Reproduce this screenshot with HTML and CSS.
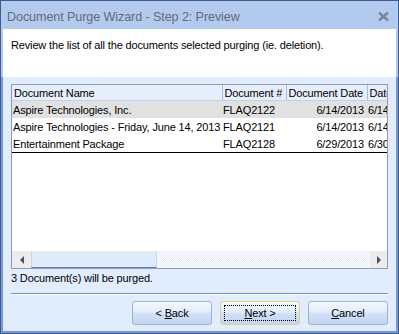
FILE: index.html
```html
<!DOCTYPE html>
<html lang="en">
<head>
  <meta charset="UTF-8" />
  <title>Document Purge Wizard</title>
  <link rel="stylesheet" href="styles.css">
</head>
<body>
  <div class="window">
    <div class="titlebar">
      <span class="title">Document Purge Wizard - Step 2: Preview</span>
      <svg class="close" width="11" height="9" viewBox="0 0 11 9">
        <path d="M1 0.5 L10 8.5 M10 0.5 L1 8.5" stroke="#7b8394" stroke-width="2.4" />
      </svg>
    </div>

    <div class="intro">Review the list of all the documents selected purging (ie. deletion).</div>

    <div class="panel">
      <div class="listbox">
        <div class="grid">
          <table>
            <colgroup>
              <col style="width:210px"><col style="width:64px"><col style="width:81px"><col style="width:40px">
            </colgroup>
            <thead>
              <tr><th>Document Name</th><th>Document #</th><th>Document Date</th><th>Date</th></tr>
            </thead>
            <tbody>
              <tr class="selected"><td>Aspire Technologies, Inc.</td><td>FLAQ2122</td><td class="num">6/14/2013</td><td>6/14/2013</td></tr>
              <tr><td>Aspire Technologies - Friday, June 14, 2013</td><td>FLAQ2121</td><td class="num">6/14/2013</td><td>6/14/2013</td></tr>
              <tr class="last"><td>Entertainment Package</td><td>FLAQ2128</td><td class="num">6/29/2013</td><td>6/30/2013</td></tr>
            </tbody>
          </table>
        </div>
        <div class="hscroll">
          <div class="sbtn"><span class="arrow left"></span></div>
          <div class="track"><div class="thumb"></div></div>
          <div class="sbtn"><span class="arrow right"></span></div>
        </div>
      </div>

      <div class="status">3 Document(s) will be purged.</div>
      <div class="divider"></div>

      <div class="buttons">
        <button class="btn">&lt; <u>B</u>ack</button>
        <button class="btn default"><span class="focus"><u>N</u>ext &gt;</span></button>
        <button class="btn"><u>C</u>ancel</button>
      </div>
    </div>
  </div>
</body>
</html>
```

FILE: styles.css
```css
body {
  margin: 0;
  background: #fff;
  font-family: "Liberation Sans", sans-serif;
  font-size: 11px;
  letter-spacing: -0.15px;
  color: #000;
}
.window {
  width: 399px;
  height: 334px;
  box-sizing: border-box;
  border: 1px solid #3e5c92;
  background: #b2caee;
  display: flex;
  flex-direction: column;
}
.titlebar {
  height: 28px;
  flex: none;
  display: flex;
  align-items: center;
  justify-content: space-between;
  padding: 0 9px 0 6px;
}
.title {
  font-size: 12.6px;
  letter-spacing: -0.1px;
  color: #626a7c;
  padding-top: 3px;
}
.close {
  display: block;
  margin-top: 2px;
}
.intro {
  height: 48px;
  flex: none;
  margin: 0 2px;
  background: #fff;
  box-sizing: border-box;
  padding: 10px 0 0 8px;
}
.panel {
  flex: 1;
  background: #e1ecfc;
  border: 2px solid #7898d0;
  border-top: none;
  padding: 7px 8px 6px;
  display: flex;
  flex-direction: column;
}
.listbox {
  height: 185px;
  box-sizing: border-box;
  border: 1px solid #8d9cb4;
  background: #fff;
  display: flex;
  flex-direction: column;
}
.grid {
  flex: 1;
  overflow: hidden;
}
table {
  table-layout: fixed;
  border-collapse: collapse;
  width: 395px;
  font-size: 11px;
}
th, td {
  white-space: nowrap;
  overflow: hidden;
  padding: 0 2px 0 1px;
  text-align: left;
  font-weight: normal;
}
th {
  height: 15px;
  background: #e6eefb;
  border-right: 1px solid #a5bbe0;
  border-bottom: 1px solid #c3d2ea;
  padding-left: 2px;
}
td {
  height: 17px;
}
td.num {
  text-align: right;
  padding-right: 3px;
}
tr.selected td {
  background: #e1e1e1;
}
tr.last td {
  border-bottom: 1px solid #000;
}
.hscroll {
  height: 17px;
  flex: none;
  display: flex;
}
.sbtn {
  width: 19px;
  background: #ececec;
  display: flex;
  align-items: center;
  justify-content: center;
}
.sbtn:last-child {
  width: 17px;
}
.arrow {
  width: 0;
  height: 0;
  border-top: 4px solid transparent;
  border-bottom: 4px solid transparent;
}
.arrow.left {
  border-right: 4px solid #3d4f7a;
}
.arrow.right {
  border-left: 4px solid #3d4f7a;
}
.track {
  flex: 1;
  background-color: #fff;
  background-image: repeating-conic-gradient(#e4ecf8 0 25%, #fff 0 50%);
  background-size: 2px 2px;
}
.thumb {
  width: 126px;
  height: 17px;
  box-sizing: border-box;
  background: #dfeafc;
  border: 1px solid #c9d4e4;
  border-top-color: #f3f0e0;
  border-bottom: 1px solid #5a7cc0;
}
.status {
  height: 14px;
  margin-top: 3px;
}
.divider {
  margin-top: 7px;
  height: 1px;
  background: #6f8fc8;
  border-bottom: 1px solid #fff;
}
.buttons {
  margin-top: 6px;
  display: flex;
  justify-content: flex-end;
  gap: 8px;
}
.btn {
  width: 80px;
  height: 24px;
  box-sizing: border-box;
  border: 1px solid #9fb2d0;
  border-radius: 3px;
  background: linear-gradient(#f3f7fd, #e4edfb 45%, #cfdff5 55%, #c3d6f2);
  font-family: "Liberation Sans", sans-serif;
  font-size: 11px;
  letter-spacing: -0.15px;
  color: #000;
  padding: 0;
}
.btn.default {
  border-color: #e8cf86;
  padding: 3px;
}
.focus {
  display: flex;
  align-items: center;
  justify-content: center;
  height: 100%;
  border: 1px dotted #000;
  box-sizing: border-box;
}
```
